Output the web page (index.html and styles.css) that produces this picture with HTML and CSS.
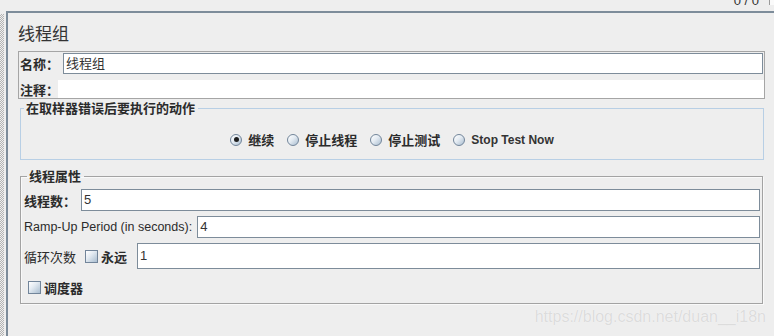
FILE: index.html
```html
<!DOCTYPE html>
<html lang="zh">
<head>
<meta charset="utf-8">
<title>线程组</title>
<link rel="stylesheet" href="styles.css">
</head>
<body>
<div class="topbar">
  <span class="counter">0 / 0</span>
  <span class="tinybox"></span>
</div>
<div class="main">
  <div class="splitter"></div>
  <div class="panel">
    <h1 class="title">线程组</h1>

    <div class="namebox">
      <div class="namerow">
        <span class="lbl lbl-name">名称：</span>
        <div class="field">线程组</div>
      </div>
      <div class="commentrow">
        <span class="lbl lbl-comment">注释：</span>
        <div class="plainfield"></div>
      </div>
    </div>

    <fieldset class="group group-blue">
      <legend class="legend">在取样器错误后要执行的动作</legend>
      <div class="radios">
        <span class="opt"><span class="radio checked"></span><span class="opt-text">继续</span></span>
        <span class="opt"><span class="radio"></span><span class="opt-text">停止线程</span></span>
        <span class="opt"><span class="radio"></span><span class="opt-text">停止测试</span></span>
        <span class="opt"><span class="radio"></span><span class="opt-text en">Stop Test Now</span></span>
      </div>
    </fieldset>

    <fieldset class="group group-gray">
      <legend class="legend">线程属性</legend>
      <div class="row">
        <span class="lbl lbl-threads">线程数：</span>
        <div class="field f22">5</div>
      </div>
      <div class="row">
        <span class="lbl-en">Ramp-Up Period (in seconds):</span>
        <div class="field f22">4</div>
      </div>
      <div class="row">
        <span class="lbl-loop">循环次数</span>
        <span class="check check-forever"></span>
        <span class="lbl lbl-forever">永远</span>
        <div class="field f26">1</div>
      </div>
      <div class="row sched">
        <span class="check"></span>
        <span class="lbl lbl-sched">调度器</span>
      </div>
    </fieldset>
  </div>
</div>
<div class="watermark">https://blog.csdn.net/duan__i18n</div>
</body>
</html>
```

FILE: styles.css
```css
html, body {
  margin: 0;
  padding: 0;
}
body {
  width: 774px;
  height: 336px;
  overflow: hidden;
  background: #eeeeee;
  font-family: "Liberation Sans", "Noto Sans CJK SC", sans-serif;
  font-size: 13px;
  color: #2b2b2b;
  position: relative;
}

.topbar {
  height: 11px;
  overflow: hidden;
  display: flex;
  justify-content: flex-end;
  align-items: flex-start;
}
.counter {
  font-size: 13px;
  line-height: 13px;
  margin-top: -6px;
  margin-right: 10px;
  color: #333;
}
.tinybox {
  width: 4px;
  height: 5px;
  border-left: 1px solid #9a9a9a;
  background: #fafafa;
}

.main {
  display: flex;
  height: 325px;
}
.splitter {
  width: 4px;
  margin-top: 3px;
  margin-right: 2px;
  background: repeating-conic-gradient(#b4b4b4 0 25%, #eeeeee 0 50%) 0 0 / 2px 2px;
}
.panel {
  flex: 1;
  border-top: 2px solid #7d8c9a;
  border-left: 2px solid #7d8c9a;
  padding: 0 9px 0 10px;
}

.title {
  margin: 12px 0 6px 0;
  font-size: 17px;
  line-height: 20px;
  font-weight: normal;
  color: #333;
}

.namebox {
  border: 1px solid #a5a5a5;
  height: 46px;
}
.namerow {
  display: flex;
  align-items: center;
  margin-top: 1px;
  margin-right: 1px;
  height: 21px;
}
.lbl {
  font-weight: bold;
  white-space: nowrap;
}
.lbl-name {
  width: 43px;
  padding-left: 1px;
}
.lbl-comment {
  width: 38px;
  padding-left: 1px;
}
.field {
  flex: 1;
  height: 21px;
  box-sizing: border-box;
  background: #fff;
  border: 1px solid #7d8c9a;
  padding-left: 2px;
  line-height: 19px;
  color: #333;
}
.f22 { height: 22px; line-height: 20px; }
.f26 { height: 26px; line-height: 24px; }

.commentrow {
  display: flex;
  align-items: center;
  margin-top: 6px;
  height: 18px;
}
.plainfield {
  flex: 1;
  height: 18px;
  background: #fff;
}

.group {
  margin: 0;
  padding: 0;
  min-inline-size: 0;
}
.legend {
  margin-left: 3px;
  padding: 0 3px 0 2px;
  font-weight: bold;
  font-size: 13px;
  line-height: 13px;
  color: #2b2b2b;
}
.group-blue {
  border: 1px solid #b8cfe5;
  margin: 3px 1px 0 2px;
  padding: 0 0 11px 0;
}
.radios {
  display: flex;
  justify-content: center;
  align-items: center;
  gap: 13px;
  height: 17px;
  margin-top: 16px;
}
.opt {
  display: flex;
  align-items: center;
}
.radio {
  width: 12px;
  height: 12px;
  box-sizing: border-box;
  border-radius: 50%;
  border: 1px solid #72859a;
  background: linear-gradient(135deg, #ffffff 0%, #e4ebf2 45%, #a9bdd0 100%);
  margin-right: 6px;
  display: flex;
  align-items: center;
  justify-content: center;
}
.radio.checked::after {
  content: "";
  width: 5px;
  height: 5px;
  border-radius: 50%;
  background: #1e1e1e;
}
.opt-text {
  font-weight: bold;
  white-space: nowrap;
}
.opt-text.en {
  font-size: 12px;
  color: #333;
}

.group-gray {
  border: 1px solid #a3a3a3;
  box-shadow: inset 1px 1px 0 #f9f9f9, 1px 1px 0 #f9f9f9;
  margin: 10px 2px 0 2px;
  padding: 6px 2px 9px 3px;
}
.row {
  display: flex;
  align-items: center;
  margin-bottom: 5px;
}
.lbl-threads {
  width: 57px;
}
.lbl-en {
  font-size: 12.5px;
  margin-right: 5px;
  white-space: nowrap;
  color: #2b2b2b;
}
.lbl-loop {
  margin-right: 9px;
  white-space: nowrap;
}
.check {
  width: 13px;
  height: 13px;
  box-sizing: border-box;
  border: 1px solid #72859a;
  background: linear-gradient(135deg, #ffffff 0%, #e4ebf2 40%, #a9bdd0 100%);
}
.check-forever {
  margin-right: 3px;
}
.lbl-forever {
  margin-right: 10px;
}
.sched {
  margin-top: 11px;
  margin-bottom: 0;
  padding-left: 4px;
  height: 14px;
}
.lbl-sched {
  margin-left: 3px;
}

.watermark {
  position: absolute;
  right: 8px;
  bottom: 10px;
  font-family: "Liberation Sans", sans-serif;
  font-size: 16px;
  line-height: 18px;
  color: #dcdcdc;
  text-shadow: 0 0 1px #ffffff;
}
```
